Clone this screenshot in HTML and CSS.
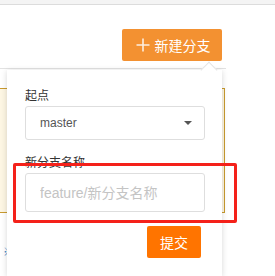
FILE: index.html
```html
<!DOCTYPE html>
<html>
<head>
  <meta charset="UTF-8">
  <title>新建分支</title>
  <link rel="stylesheet" href="styles.css">
</head>
<body>
  <div class="topbar"></div>

  <div class="toolbar">
    <button type="button" class="btn-new">
      <svg class="icon-plus" width="14" height="14" viewBox="0 0 14 14">
        <path d="M7 0.5V13.5M0.5 7H13.5" stroke="#fff" stroke-width="1.6" fill="none"/>
      </svg>
      新建分支
    </button>
  </div>

  <div class="content">
    <div class="notice"></div>
    <a class="link" href="#">※</a>
  </div>

  <!-- 新建分支弹出框 -->
  <div class="popover">
    <form class="branch-form">
      <div class="form-group">
        <label>起点</label>
        <div class="select-box">
          <span>master</span>
          <span class="caret"></span>
        </div>
      </div>
      <div class="form-group">
        <label for="branch">新分支名称</label>
        <input type="text" id="branch" placeholder="feature/新分支名称">
      </div>
      <div class="form-actions">
        <button type="button" class="btn-submit">提交</button>
      </div>
    </form>
  </div>

  <div class="highlight"></div>
</body>
</html>
```

FILE: styles.css
```css
body {
  margin: 0;
  font-family: "Liberation Sans", "Noto Sans CJK SC", sans-serif;
  font-size: 12px;
  color: #333;
  background: #fff;
  overflow: hidden;
}
.topbar {
  height: 4px;
  background: #f4f4f4;
  border-bottom: 1px solid #dcdcdc;
}
.toolbar {
  width: 226px;
  height: 64px;
  display: flex;
  align-items: flex-start;
  padding-top: 24px;
  box-sizing: border-box;
  border-bottom: 1px solid #e2e2e2;
}
.btn-new {
  margin-left: auto;
  margin-right: 4px;
  width: 100px;
  height: 32px;
  background: #f39131;
  color: #fff;
  border: none;
  border-radius: 2px;
  font-family: inherit;
  font-size: 14px;
  display: flex;
  align-items: center;
  justify-content: center;
  gap: 5px;
  padding: 0 0 0 2px;
}
.icon-plus {
  opacity: 0.85;
}
.content {
  padding-top: 19px;
}
.notice {
  width: 224px;
  height: 123px;
  background: #fdf6e3;
  border: 1px solid #c99a2e;
  border-left: none;
}
.link {
  display: block;
  margin: 30px 0 0 3px;
  color: #3b82c4;
  font-size: 11px;
  text-decoration: none;
}
.popover {
  position: absolute;
  top: 70px;
  left: 7px;
  width: 215px;
  height: 206px;
  background: #fff;
  box-shadow: 0 1px 6px rgba(0, 0, 0, 0.16);
  padding: 17px 17px 0 18px;
  box-sizing: border-box;
}
.popover::before {
  content: "";
  position: absolute;
  top: -6px;
  left: 196px;
  width: 11px;
  height: 11px;
  background: #fff;
  border-top: 1px solid #e4e4e4;
  border-left: 1px solid #e4e4e4;
  transform: rotate(45deg);
}
.form-group {
  margin-bottom: 14px;
}
label {
  display: block;
  line-height: 18px;
  margin-bottom: 1px;
  color: #333;
}
.select-box {
  height: 34px;
  border: 1px solid #dedede;
  border-radius: 3px;
  display: flex;
  align-items: center;
  justify-content: space-between;
  padding: 0 12px 0 14px;
  box-sizing: border-box;
  color: #555;
  font-size: 12px;
}
.caret {
  width: 0;
  height: 0;
  border-left: 4px solid transparent;
  border-right: 4px solid transparent;
  border-top: 4px solid #555;
}
input {
  width: 100%;
  height: 39px;
  border: 1px solid #dedede;
  border-radius: 3px;
  padding: 0 14px;
  box-sizing: border-box;
  font-family: inherit;
  font-size: 14px;
  outline: none;
}
input::placeholder {
  color: #c4c4c4;
}
.form-actions {
  display: flex;
  justify-content: flex-end;
  padding-right: 4px;
}
.btn-submit {
  width: 54px;
  height: 32px;
  background: #ff7400;
  color: #fff;
  border: none;
  border-radius: 2px;
  font-family: inherit;
  font-size: 14px;
  padding: 0;
}
.highlight {
  position: absolute;
  top: 163px;
  left: 13px;
  width: 224px;
  height: 60px;
  border: 3px solid #f4211a;
  border-radius: 2px;
  box-sizing: border-box;
}
```
